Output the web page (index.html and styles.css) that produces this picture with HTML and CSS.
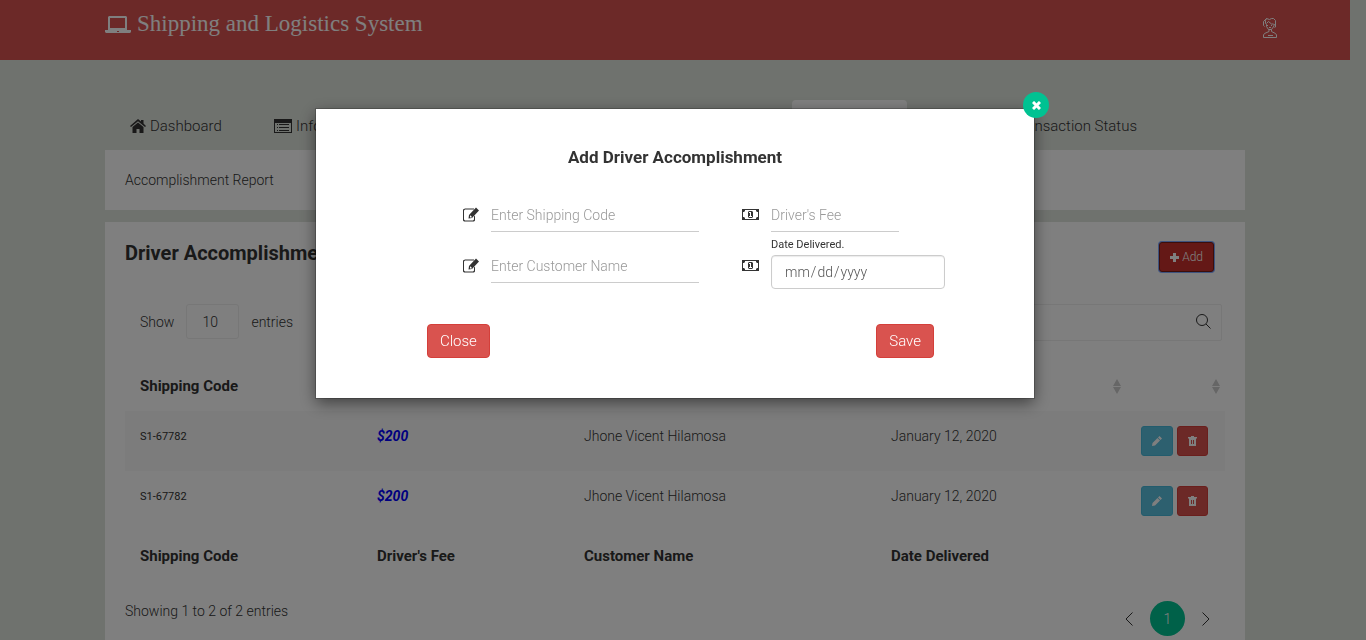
FILE: index.html
```html
<!DOCTYPE html>
<html lang="en">
<head>
<meta charset="utf-8">
<meta name="viewport" content="width=device-width, initial-scale=1">
<title>Shipping and Logistics System</title>
<link rel="stylesheet" href="styles.css">
</head>
<body>
<svg class="sprite" aria-hidden="true">
  <symbol id="i-laptop" viewBox="0 0 26 17"><path fill-rule="evenodd" d="M4 0h17l1 1v13H3V1zM5 2v10h15V2z"/><path fill-rule="evenodd" d="M0 14h26v2l-1 1H1l-1-1zM12 15v1h2v-1z"/></symbol>
  <symbol id="i-user" viewBox="0 0 14 20"><path fill="none" stroke="currentColor" d="M1.500 8.500l-1-1v-4l3-3 3 1 2-1h2l2 2v3.500l-1 .5M3.500 .5l-1 2v3l1 1v2l2 3h3l2.500-3.500v-2M3.500 5.500l2-2 3 2.500h2M4 7.500h1M8 7.500h1M6 9.500h2M12.500 6v3l-1 .5M6 11.500v2l-4.500 2-1 1.500v2.500h13V17l-1-1.500-4-2v-2M5 17.500h5"/></symbol>
  <symbol id="i-home" viewBox="0 0 16 14"><path d="M8 3.500L13.500 8v6h-4v-4h-3v4h-4V8zM8 0l3 2.500V1h2.500v3.500L16 7l-1 1-7-5.800L1 8 0 7z"/></symbol>
  <symbol id="i-list" viewBox="0 0 18 14"><path fill-rule="evenodd" d="M0 0h18v14H0zM1 4v9h16V4zM3 5h1v1H3zm2 0h10v1H5zM3 8h1v1H3zm2 0h10v1H5zM3 11h1v1H3zm2 0h10v1H5z"/></symbol>
  <symbol id="i-plus" viewBox="0 0 9 9"><path d="M3 0h3v3h3v3H6v3H3V6H0V3h3z"/></symbol>
  <symbol id="i-search" viewBox="0 0 15 15"><g fill="none" stroke="currentColor"><circle cx="6" cy="6" r="5.500"/><path d="M10 10l4.500 4.500"/></g></symbol>
  <symbol id="i-sort" viewBox="0 0 8 15"><path d="M4 0l4 7H0zM0 8h8l-4 7z"/></symbol>
  <symbol id="i-pencil" viewBox="0 0 10 10"><path d="M7.500 0L10 2.500 8.500 4 6 1.500zM5.500 2L8 4.500 3 9.500 0 10l.5-3z"/></symbol>
  <symbol id="i-trash" viewBox="0 0 9 10"><path fill-rule="evenodd" d="M3 0h3v1h3v1.500H8V10H1V2.500H0V1h3zM3 4v4h1V4zm2 0v4h1V4z"/></symbol>
  <symbol id="i-edit" viewBox="0 0 17 14"><path d="M3 1h9v1H3L2 3v9l1 1h8l1-1V9l1-1v5l-1 1H2l-1-1V2z"/><path fill-rule="evenodd" d="M14 0l3 3-7 7.500-3.500.5.500-3.500zM8 8v2h1.500l.5-.5L8.500 8z"/></symbol>
  <symbol id="i-money" viewBox="0 0 17 11"><path fill-rule="evenodd" d="M0 0h17v11H0zM3 1v1L2 3H1v5h1l1 1v1h11V9l1-1h1V3h-1l-1-1V1z"/><path fill-rule="evenodd" d="M7 2h3l1 1v5l-1 1H7L6 8V3zM7 3v1h1v3H7v1h3V7H9V3z"/></symbol>
  <symbol id="i-x" viewBox="0 0 9 9"><path fill="none" stroke="currentColor" stroke-width="3" d="M1 1l7 7M8 1L1 8"/></symbol>
  <symbol id="i-left" viewBox="0 0 8 14"><path fill="none" stroke="currentColor" d="M7.500 .5L1 7l6.500 6.500"/></symbol>
  <symbol id="i-right" viewBox="0 0 8 14"><path fill="none" stroke="currentColor" d="M.5 .5L7 7 .5 13.500"/></symbol>
</svg>

<header class="topbar">
  <div class="container topbar-inner">
    <a class="brand" href="#"><svg width="26" height="17"><use href="#i-laptop"/></svg>Shipping and Logistics System</a>
    <button class="user" type="button" aria-label="Account"><svg width="14" height="20"><use href="#i-user"/></svg></button>
  </div>
</header>

<main class="container">
  <nav class="tabs">
    <a class="tab" href="#"><svg width="16" height="14"><use href="#i-home"/></svg>Dashboard</a>
    <a class="tab" href="#"><svg width="18" height="14"><use href="#i-list"/></svg>Information</a>
    <a class="tab active" href="#">Reports</a>
    <a class="tab status" href="#">Transaction Status</a>
  </nav>

  <section class="card crumb">Accomplishment Report</section>

  <section class="card report">
    <div class="report-head">
      <h1>Driver Accomplishment</h1>
      <button class="btn add" type="button"><svg width="9" height="9"><use href="#i-plus"/></svg>Add</button>
    </div>

    <div class="controls">
      <label class="length">Show
        <select><option>10</option></select>
        entries</label>
      <div class="search">
        <input type="search" aria-label="Search">
        <svg width="15" height="15"><use href="#i-search"/></svg>
      </div>
    </div>

    <table class="grid">
      <colgroup><col class="c-code"><col class="c-fee"><col class="c-name"><col class="c-date"><col class="c-act"></colgroup>
      <thead>
        <tr>
          <th>Shipping Code</th><th>Driver's Fee</th><th>Customer Name</th>
          <th><span class="sortable">Date Delivered<svg width="8" height="15"><use href="#i-sort"/></svg></span></th>
          <th><span class="sortable end"><svg width="8" height="15"><use href="#i-sort"/></svg></span></th>
        </tr>
      </thead>
      <tbody>
        <tr>
          <td class="code">S1-67782</td><td class="fee">$200</td><td>Jhone Vicent Hilamosa</td><td>January 12, 2020</td>
          <td class="actions"><div class="action-set">
            <button class="btn info" type="button" aria-label="Edit"><svg width="10" height="10"><use href="#i-pencil"/></svg></button>
            <button class="btn danger" type="button" aria-label="Delete"><svg width="9" height="10"><use href="#i-trash"/></svg></button>
          </div></td>
        </tr>
        <tr>
          <td class="code">S1-67782</td><td class="fee">$200</td><td>Jhone Vicent Hilamosa</td><td>January 12, 2020</td>
          <td class="actions"><div class="action-set">
            <button class="btn info" type="button" aria-label="Edit"><svg width="10" height="10"><use href="#i-pencil"/></svg></button>
            <button class="btn danger" type="button" aria-label="Delete"><svg width="9" height="10"><use href="#i-trash"/></svg></button>
          </div></td>
        </tr>
      </tbody>
      <tfoot>
        <tr><th>Shipping Code</th><th>Driver's Fee</th><th>Customer Name</th><th>Date Delivered</th><th></th></tr>
      </tfoot>
    </table>

    <div class="table-foot">
      <p>Showing 1 to 2 of 2 entries</p>
      <nav class="pages" aria-label="Pages">
        <a href="#" aria-label="Previous"><svg width="8" height="14"><use href="#i-left"/></svg></a>
        <a class="current" href="#">1</a>
        <a href="#" aria-label="Next"><svg width="8" height="14"><use href="#i-right"/></svg></a>
      </nav>
    </div>
  </section>
</main>

<div class="overlay">
  <form class="modal" role="dialog" aria-labelledby="modal-title">
    <button class="dismiss" type="button" aria-label="Dismiss"><svg width="9" height="9"><use href="#i-x"/></svg></button>
    <h2 id="modal-title">Add Driver Accomplishment</h2>
    <div class="fields">
      <div class="field">
        <svg width="17" height="14"><use href="#i-edit"/></svg>
        <input class="line" type="text" placeholder="Enter Shipping Code" aria-label="Shipping code">
      </div>
      <div class="field">
        <svg width="17" height="11"><use href="#i-money"/></svg>
        <input class="line fee-input" type="text" placeholder="Driver's Fee" aria-label="Driver's fee">
      </div>
      <div class="field second">
        <svg width="17" height="14"><use href="#i-edit"/></svg>
        <input class="line" type="text" placeholder="Enter Customer Name" aria-label="Customer name">
      </div>
      <div class="field second">
        <svg width="17" height="11"><use href="#i-money"/></svg>
        <div class="date">
          <label for="delivered">Date Delivered.</label>
          <input id="delivered" type="date">
        </div>
      </div>
    </div>
    <div class="modal-actions">
      <button class="btn danger large" type="button">Close</button>
      <button class="btn danger large" type="submit">Save</button>
    </div>
  </form>
</div>
</body>
</html>
```
FILE: styles.css
```css
* { box-sizing: border-box; }

body {
  margin: 0;
  padding-right: 16px;
  min-height: 100vh;
  overflow: hidden;
  background: #dfe4dd;
  color: #333;
  font: 300 14px/20px Roboto, "Liberation Sans", sans-serif;
}

svg { fill: currentColor; flex: none; }
.sprite { position: absolute; width: 0; height: 0; }
a { color: inherit; text-decoration: none; }
h1, h2, p { margin: 0; }
button, input, select { font: inherit; color: inherit; }

.container { width: 100%; max-width: 1140px; margin: 0 auto; }

.topbar { background: #d95351; color: #fff; }
.topbar-inner {
  display: flex;
  align-items: flex-start;
  justify-content: space-between;
  height: 60px;
  padding-top: 10px;
}
.brand {
  display: flex;
  align-items: center;
  gap: 6px;
  font: 23px/28px "Liberation Serif", serif;
}
.user { margin: 8px -32px 0 0; padding: 0; border: 0; background: none; line-height: 0; }

.tabs {
  display: grid;
  grid-template-columns: 144px 1fr 115px 338px;
  height: 50px;
  margin-top: 40px;
  font-size: 15px;
}
.tab { display: flex; align-items: center; gap: 4px; padding: 2px 25px 0; }
.tab.active { background: #fff; border-radius: 4px 4px 0 0; }
.tab.status { justify-content: flex-end; padding-right: 108px; }

.card { background: #fff; }
.crumb { padding: 20px; margin-bottom: 12px; }
.report { padding: 20px; }

.report-head { display: flex; justify-content: space-between; align-items: flex-start; }
.report-head h1 { font-size: 20px; line-height: 22px; font-weight: 700; }

.btn {
  display: inline-flex;
  align-items: center;
  justify-content: center;
  gap: 3px;
  height: 30px;
  padding: 0 10px;
  border: 1px solid;
  border-radius: 3px;
  font-size: 12px;
  color: #fff;
}
.btn.danger { background: #d9534f; border-color: #d43f3a; }
.btn.info { background: #5bc0de; border-color: #46b8da; }
.btn.add { margin-right: 11px; background: #c9302c; border-color: #761c19; box-shadow: 0 0 0 1px #7da7ff; }
.btn.large { height: 34px; padding: 0 12px; border-radius: 4px; font-size: 15px; }

.controls { display: flex; justify-content: space-between; align-items: flex-start; margin: 32px 3px 0 15px; }
.length { display: flex; align-items: center; gap: 12px; }
.length select {
  appearance: none;
  width: 53px;
  height: 35px;
  padding: 0 15px;
  border: 1px solid #eee;
  border-radius: 3px;
  background: #fff;
}
.search { position: relative; width: 300px; }
.search input { width: 100%; height: 37px; border: 1px solid #eee; border-radius: 2px; background: #fff; appearance: none; }
.search svg { position: absolute; top: 10px; right: 11px; }

.grid { width: 100%; margin-top: 20px; table-layout: fixed; border-collapse: collapse; }
.c-code { width: 237px; }
.c-fee { width: 207px; }
.c-name { width: 307px; }
.c-act { width: 99px; }
.grid th, .grid td { padding: 15px; text-align: left; vertical-align: top; }
.grid th { font-weight: 700; font-size: 15px; }
.grid td { height: 60px; }
.grid tbody tr:first-child { background: #f9f9f9; }
.grid .code { font-size: 11px; line-height: 22px; font-weight: 400; }
.grid .fee { color: #00f; font-weight: 700; font-style: italic; }
.grid td.actions { padding-right: 0; }
.action-set { display: flex; gap: 4px; }
.sortable { display: flex; justify-content: space-between; align-items: center; height: 20px; margin-right: -10px; }
.sortable.end { justify-content: flex-end; }
.sortable svg { color: #ccc; }

.table-foot { display: flex; justify-content: space-between; padding: 20px 15px 10px 0; }
.pages { display: flex; align-items: center; gap: 17px; }
.pages a { display: flex; }
.pages .current {
  align-items: center;
  justify-content: center;
  width: 35px;
  height: 35px;
  border-radius: 50%;
  background: #00c292;
  color: #fff;
}

.overlay {
  position: fixed;
  inset: 0;
  display: flex;
  justify-content: center;
  align-items: flex-start;
  padding: 109px 16px 0 0;
  background: rgba(0, 0, 0, .5);
}
.modal {
  position: relative;
  width: 718px;
  padding: 38px 0 40px;
  background: #fff;
  box-shadow: 0 0 0 1px rgba(0, 0, 0, .2), 0 5px 15px rgba(0, 0, 0, .5);
}
.modal h2 { font-size: 17px; line-height: 20px; font-weight: 700; text-align: center; }
.dismiss {
  position: absolute;
  top: -17px;
  right: -15px;
  display: flex;
  align-items: center;
  justify-content: center;
  width: 26px;
  height: 26px;
  padding: 0;
  border: 0;
  border-radius: 50%;
  background: #00c292;
  color: #fff;
}
.fields {
  display: grid;
  grid-template-columns: 237px 203px;
  column-gap: 43px;
  row-gap: 6px;
  margin-top: 31px;
  padding-left: 146px;
}
.field { display: flex; align-items: flex-start; gap: 12px; }
.field > svg { height: 33px; }
.second > svg, .second > .line { margin-top: 11px; }
.line {
  width: 100%;
  height: 34px;
  padding: 0;
  border: 0;
  border-bottom: 1px solid #ccc;
  background: none;
  outline: 0;
}
.fee-input { width: 128px; }
.line::placeholder { color: #999; opacity: 1; }
.date { flex: 1; }
.date label { display: block; font-size: 11px; line-height: 13px; padding-bottom: 4px; font-weight: 400; }
.date input {
  display: block;
  width: 100%;
  height: 34px;
  padding: 0 12px;
  border: 1px solid #ccc;
  border-radius: 4px;
  background: #fff;
  box-shadow: inset 0 1px 1px rgba(0, 0, 0, .08);
  color: #555;
}
.date input::-webkit-calendar-picker-indicator { display: none; }
.modal-actions { display: flex; justify-content: space-between; margin: 35px 100px 0 111px; }
```
